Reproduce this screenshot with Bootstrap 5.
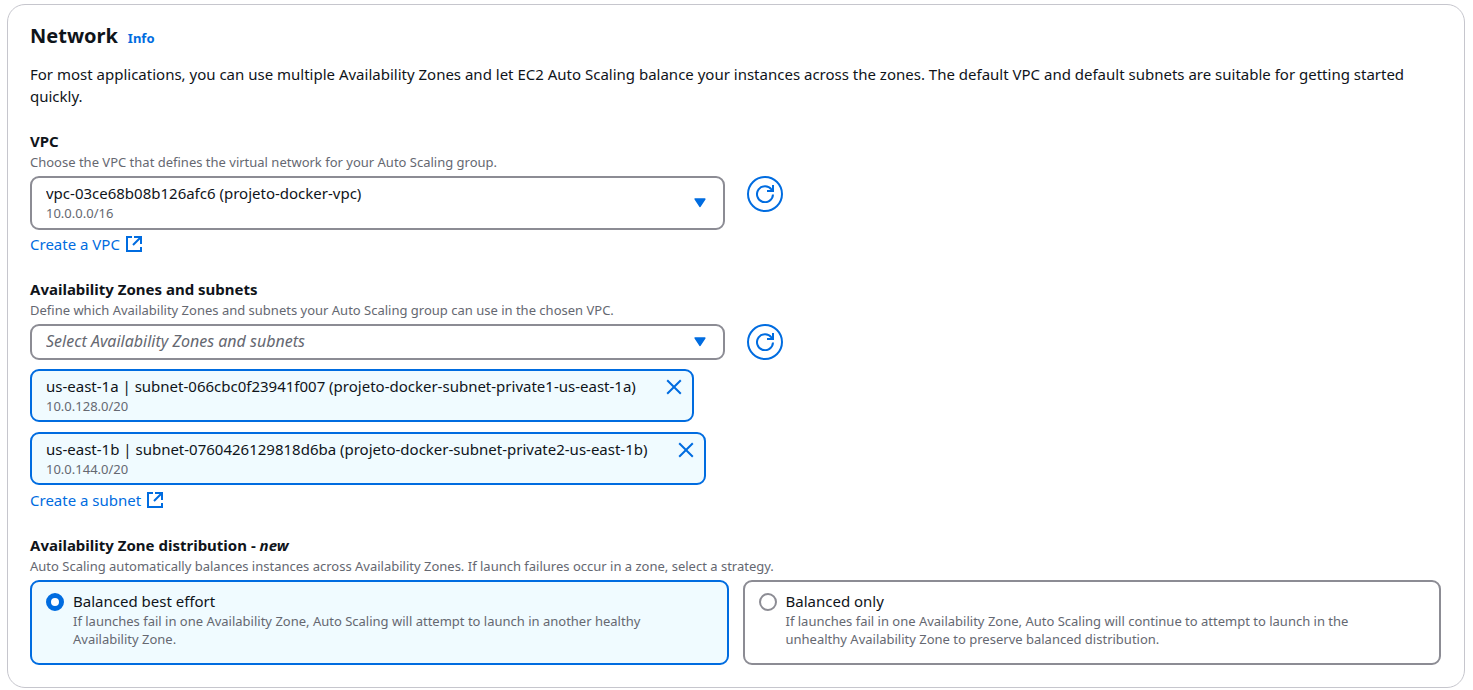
<!DOCTYPE html>
<html lang="en">
<head>
<meta charset="utf-8">
<meta name="viewport" content="width=device-width, initial-scale=1">
<title>Network</title>
<link href="https://cdn.jsdelivr.net/npm/bootstrap@5.3.0/dist/css/bootstrap.min.css" rel="stylesheet">
<style>
  :root { --ink: #0f141a; --hint: #656871; --accent: #006ce0; --edge: #8c8c94; --tint: #f0fbff; }
  body { font-family: "Noto Sans", "Open Sans", sans-serif; font-size: 15px; line-height: 22px; color: var(--ink); background: #fff; }
  a { color: var(--accent); text-decoration: none; }
  a:hover { text-decoration: underline; }
  .panel { margin: 4px 8px 0 7px; padding: 19px 23px 22px 22px; border: 1px solid #c6c6cd; border-radius: 18px; }
  .panel-head { display: flex; align-items: baseline; gap: 10px; margin-bottom: 15px; }
  .panel-title { font-size: 20px; line-height: 24px; font-weight: 700; }
  .info-link { font-size: 13px; line-height: 16px; font-weight: 700; }
  .stack { display: flex; flex-direction: column; gap: 24px; }
  .field-label { display: block; font-weight: 700; line-height: 20px; margin-bottom: 2px; }
  .hint { font-size: 13px; line-height: 18px; color: var(--hint); }
  .field-hint { margin-bottom: 5px; }
  .field-row { --bs-gutter-x: 22px; }
  .picker { position: relative; }
  .picker select {
    display: block; width: 100%; height: 36px; padding: 0 48px 0 14px;
    border: 2px solid var(--edge); border-radius: 9px; background: #fff;
    color: var(--ink); appearance: none;
  }
  .picker .two-line { height: 54px; padding-bottom: 20px; }
  .picker .empty { color: var(--hint); font-style: italic; font-size: 16px; padding-bottom: 2px; }
  .picker .caret { position: absolute; right: 19px; top: 50%; margin-top: -5px; color: var(--accent); pointer-events: none; }
  .picker .sub { position: absolute; left: 16px; bottom: 8px; pointer-events: none; }
  .round-btn {
    display: flex; align-items: center; justify-content: center; width: 36px; height: 36px; padding: 0;
    border: 2px solid var(--accent); border-radius: 50%; background: #fff; color: var(--accent);
  }
  .create-link { display: inline-flex; align-items: center; gap: 6px; vertical-align: top; margin-top: 3px; }
  .chips { display: flex; flex-direction: column; align-items: flex-start; gap: 10px; margin: 9px 0 1px; }
  .chip {
    display: flex; align-items: flex-start; gap: 30px; padding: 4px 10px 5px 14px;
    border: 2px solid var(--accent); border-radius: 9px; background: var(--tint);
  }
  .chip .hint, .tile .hint { display: block; }
  .chip-close { display: flex; padding: 4px 0; border: 0; background: none; color: var(--accent); }
  .tiles { --bs-gutter-x: 14px; }
  .tile {
    display: flex; gap: 9px; height: 100%; padding: 8px 32px 15px 14px;
    border: 2px solid var(--edge); border-radius: 9px;
  }
  .tile:has(:checked) { border-color: var(--accent); background: var(--tint); }
  .tile input {
    flex: none; width: 18px; height: 18px; margin: 3px 0 0; appearance: none;
    border: 2px solid var(--edge); border-radius: 50%; background: #fff;
  }
  .tile input:checked { border: 5px solid var(--accent); }
</style>
</head>
<body>
<svg class="d-none" aria-hidden="true">
  <symbol id="i-refresh" viewBox="0 0 18 18">
    <path d="M17 9.5A8 8 0 1 1 15.5 4.5L17 6" fill="none" stroke="currentColor" stroke-width="2"/>
    <path d="M17 0v6h-6" fill="none" stroke="currentColor" stroke-width="2"/>
  </symbol>
  <symbol id="i-external" viewBox="0 0 16 16">
    <path d="M6 1H1v14h14v-4M8 1h7v7M15 1L7 9" fill="none" stroke="currentColor" stroke-width="2"/>
  </symbol>
  <symbol id="i-caret" viewBox="0 0 12 10">
    <path d="M1.2 1h9.6L6 8.4z" fill="currentColor" stroke="currentColor" stroke-width="1.6" stroke-linejoin="round"/>
  </symbol>
  <symbol id="i-close" viewBox="0 0 16 16">
    <path d="M1.2 1.2l13.6 13.6M14.8 1.2L1.2 14.8" fill="none" stroke="currentColor" stroke-width="2"/>
  </symbol>
</svg>

<main class="panel">
  <header class="panel-head">
    <h2 class="panel-title mb-0">Network</h2>
    <a class="info-link" href="#">Info</a>
  </header>

  <div class="stack">
    <p class="mb-0">For most applications, you can use multiple Availability Zones and let EC2 Auto Scaling balance your instances across the zones. The default VPC and default subnets are suitable for getting started quickly.</p>

    <section>
      <label class="field-label" for="vpc">VPC</label>
      <div class="hint field-hint">Choose the VPC that defines the virtual network for your Auto Scaling group.</div>
      <div class="row field-row">
        <div class="col-6">
          <div class="picker">
            <select id="vpc" class="two-line" aria-describedby="vpc-cidr"><option>vpc-03ce68b08b126afc6 (projeto-docker-vpc)</option></select>
            <span id="vpc-cidr" class="sub hint">10.0.0.0/16</span>
            <svg class="caret" width="12" height="10"><use href="#i-caret"/></svg>
          </div>
        </div>
        <div class="col-auto">
          <button type="button" class="round-btn" aria-label="Refresh VPCs"><svg width="18" height="18"><use href="#i-refresh"/></svg></button>
        </div>
      </div>
      <a class="create-link" href="#">Create a VPC <svg width="16" height="16"><use href="#i-external"/></svg></a>
    </section>

    <section>
      <label class="field-label" for="subnets">Availability Zones and subnets</label>
      <div class="hint field-hint">Define which Availability Zones and subnets your Auto Scaling group can use in the chosen VPC.</div>
      <div class="row field-row">
        <div class="col-6">
          <div class="picker">
            <select id="subnets" class="empty"><option>Select Availability Zones and subnets</option></select>
            <svg class="caret" width="12" height="10"><use href="#i-caret"/></svg>
          </div>
        </div>
        <div class="col-auto">
          <button type="button" class="round-btn" aria-label="Refresh subnets"><svg width="18" height="18"><use href="#i-refresh"/></svg></button>
        </div>
      </div>
      <div class="chips">
        <div class="chip">
          <div>us-east-1a | subnet-066cbc0f23941f007 (projeto-docker-subnet-private1-us-east-1a)<span class="hint">10.0.128.0/20</span></div>
          <button type="button" class="chip-close" aria-label="Remove us-east-1a"><svg width="16" height="16"><use href="#i-close"/></svg></button>
        </div>
        <div class="chip">
          <div>us-east-1b | subnet-0760426129818d6ba (projeto-docker-subnet-private2-us-east-1b)<span class="hint">10.0.144.0/20</span></div>
          <button type="button" class="chip-close" aria-label="Remove us-east-1b"><svg width="16" height="16"><use href="#i-close"/></svg></button>
        </div>
      </div>
      <a class="create-link" href="#">Create a subnet <svg width="16" height="16"><use href="#i-external"/></svg></a>
    </section>

    <section role="radiogroup" aria-labelledby="dist">
      <div id="dist" class="field-label">Availability Zone distribution - <em>new</em></div>
      <div class="hint field-hint">Auto Scaling automatically balances instances across Availability Zones. If launch failures occur in a zone, select a strategy.</div>
      <div class="row tiles">
        <div class="col-6">
          <label class="tile">
            <input type="radio" name="distribution" checked>
            <span>Balanced best effort<span class="hint">If launches fail in one Availability Zone, Auto Scaling will attempt to launch in another healthy Availability Zone.</span></span>
          </label>
        </div>
        <div class="col-6">
          <label class="tile">
            <input type="radio" name="distribution">
            <span>Balanced only<span class="hint">If launches fail in one Availability Zone, Auto Scaling will continue to attempt to launch in the unhealthy Availability Zone to preserve balanced distribution.</span></span>
          </label>
        </div>
      </div>
    </section>
  </div>
</main>
<script src="https://cdn.jsdelivr.net/npm/bootstrap@5.3.0/dist/js/bootstrap.bundle.min.js"></script>
</body>
</html>
